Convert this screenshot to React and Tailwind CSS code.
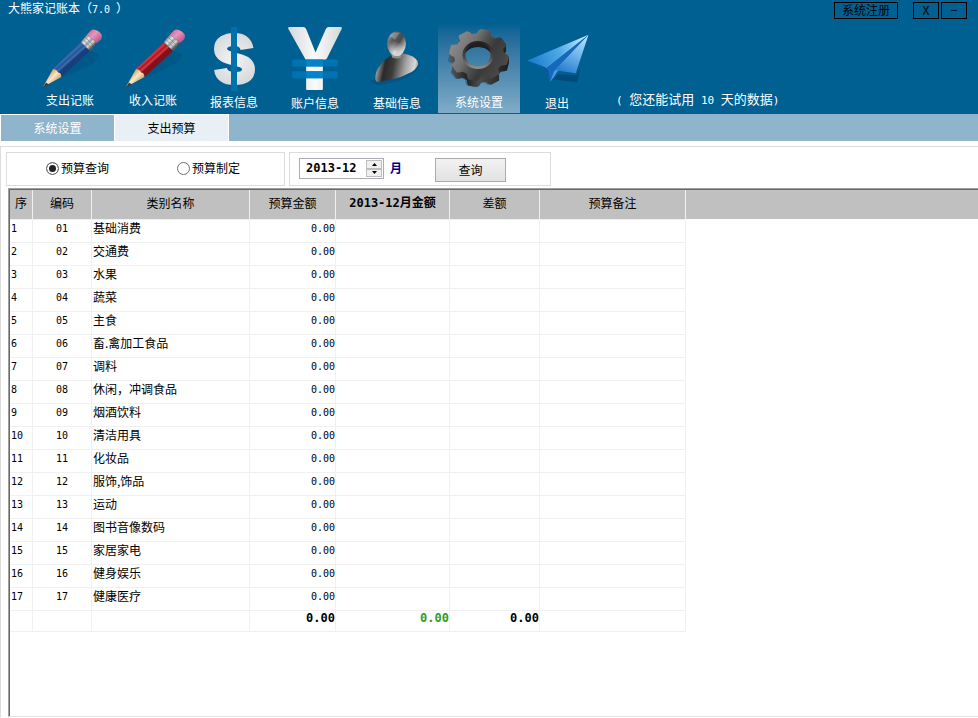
import { useState } from 'react';

const CATEGORIES = [
    '基础消费', '交通费', '水果', '蔬菜', '主食', '畜.禽加工食品', '调料', '休闲，冲调食品', '烟酒饮料',
    '清洁用具', '化妆品', '服饰,饰品', '运动', '图书音像数码', '家居家电', '健身娱乐', '健康医疗'
];

const rows = CATEGORIES.map((name, i) => ({
    no: i + 1,
    code: String(i + 1).padStart(2, '0'),
    name,
    budget: '0.00'
}));

const Pencil = ({ id, dark, mid, light }) => (
    <svg viewBox="0 0 80 70" className="h-[70px] w-[80px]" aria-hidden="true">
        <defs>
            <linearGradient id={`${id}-body`} gradientUnits="userSpaceOnUse" x1="35" y1="31" x2="43" y2="40">
                <stop offset="0" stopColor={mid} />
                <stop offset="0.25" stopColor={light} />
                <stop offset="0.4" stopColor={mid} />
                <stop offset="0.6" stopColor={light} />
                <stop offset="0.75" stopColor={dark} />
                <stop offset="1" stopColor={dark} />
            </linearGradient>
            <linearGradient id={`${id}-metal`} gradientUnits="userSpaceOnUse" x1="53" y1="14" x2="62" y2="23">
                <stop offset="0" stopColor="#77797b" />
                <stop offset="0.35" stopColor="#e6e6e6" />
                <stop offset="0.55" stopColor="#9a9c9e" />
                <stop offset="0.75" stopColor="#d8d8d8" />
                <stop offset="1" stopColor="#55585b" />
            </linearGradient>
            <linearGradient id={`${id}-wood`} gradientUnits="userSpaceOnUse" x1="20" y1="49" x2="28" y2="57">
                <stop offset="0" stopColor="#d9ab6c" />
                <stop offset="0.45" stopColor="#fbe8c6" />
                <stop offset="1" stopColor="#c99a60" />
            </linearGradient>
            <linearGradient id={`${id}-eraser`} gradientUnits="userSpaceOnUse" x1="60" y1="7" x2="69" y2="17">
                <stop offset="0" stopColor="#d4719f" />
                <stop offset="0.4" stopColor="#ea95ba" />
                <stop offset="1" stopColor="#b65a8b" />
            </linearGradient>
        </defs>
        <path d="M30 52 L60 27 L69 30 Q70 36 58 42 Q42 50 18 60 Z" fill="#00507f" opacity="0.5" />
        <path d="M13 63 L23 45 Q27 45 28 48 Q31 48 31.500 53 Z" fill={`url(#${id}-wood)`} />
        <path d="M12.500 64 L16 58.500 L19 60.500 Z" fill="#3a3c40" />
        <path d="M23 45 L51 18 L60 27 L31.500 53 Q32 48.500 28 48.500 Q27 45 23 45 Z" fill={`url(#${id}-body)`} />
        <path d="M51 18 L57 10.500 L67 19 L60 27 Z" fill={`url(#${id}-metal)`} />
        <path d="M53 15.500 L62 24.500 M55 13 L64 22" stroke="#77797b" strokeWidth="1" opacity="0.6" />
        <path d="M57 10.500 L61 6.500 Q63 5 66 6 Q70 7.500 72 11 Q72 14 71 15.500 L67 19 Z" fill={`url(#${id}-eraser)`} />
    </svg>
);

const DollarIcon = () => (
    <svg viewBox="0 0 80 70" className="h-[70px] w-[80px]" aria-hidden="true">
        <defs>
            <radialGradient id="dollar" gradientUnits="userSpaceOnUse" cx="40" cy="35" r="32">
                <stop offset="0" stopColor="#f4f4f4" />
                <stop offset="1" stopColor="#d0d3d7" />
            </radialGradient>
        </defs>
        <path
            d="M53 25 C52 18 47 15.500 40.500 15.500 C32 15.500 26.500 18.500 26.500 25 C26.500 31 32 33 40 35 C49 37 54.500 39 54.500 45.500 C54.500 52 49 54.500 41 54.500 C33 54.500 27.500 52 26.500 45"
            fill="none"
            stroke="url(#dollar)"
            strokeWidth="13"
        />
        <rect x="37" y="3" width="6" height="64" fill="#0071ac" />
    </svg>
);

const YuanIcon = () => (
    <svg viewBox="0 0 80 70" className="h-[70px] w-[80px]" aria-hidden="true">
        <defs>
            <linearGradient id="yuan" x1="0" y1="0" x2="1" y2="0">
                <stop offset="0" stopColor="#d4d7da" />
                <stop offset="0.5" stopColor="#fafafa" />
                <stop offset="1" stopColor="#d4d7da" />
            </linearGradient>
        </defs>
        <path
            d="M14 3 H28 Q30 3 31 5 L40.500 29 L51 5 Q52 3 54 3 H66 Q68 3 67 5 L52 35 Q51 37 48 37 V66 Q48 67 47 67 H32 Q31 67 31 66 V37 L13 5 Q12 3 14 3 Z"
            fill="url(#yuan)"
        />
        <rect x="17" y="36" width="46" height="7" rx="1" fill="#0073b4" />
        <rect x="17" y="48" width="46" height="7" rx="1" fill="#0073b4" />
        <rect x="31" y="36" width="17" height="7" fill="#0084ca" />
        <rect x="31" y="48" width="17" height="7" fill="#0084ca" />
    </svg>
);

const PersonIcon = () => (
    <svg viewBox="0 0 80 70" className="h-[70px] w-[80px]" aria-hidden="true">
        <defs>
            <linearGradient id="person-head" x1="0.100" y1="0" x2="0.900" y2="0.700">
                <stop offset="0" stopColor="#a8a8a8" />
                <stop offset="0.35" stopColor="#5a5a5a" />
                <stop offset="0.65" stopColor="#4a4a4a" />
                <stop offset="1" stopColor="#c4c4c4" />
            </linearGradient>
            <radialGradient id="person-chin" gradientUnits="userSpaceOnUse" cx="37" cy="29" r="12">
                <stop offset="0" stopColor="#ffffff" stopOpacity="0.800" />
                <stop offset="1" stopColor="#ffffff" stopOpacity="0" />
            </radialGradient>
            <linearGradient id="person-body" gradientUnits="userSpaceOnUse" x1="19" y1="42" x2="61" y2="50">
                <stop offset="0" stopColor="#b0b0b0" />
                <stop offset="0.2" stopColor="#2a2a2a" />
                <stop offset="0.4" stopColor="#3c3c3c" />
                <stop offset="0.7" stopColor="#a8a8a8" />
                <stop offset="0.9" stopColor="#d8d8d8" />
                <stop offset="1" stopColor="#888888" />
            </linearGradient>
        </defs>
        <path d="M13 58 L26 48 L62 38 Q66 41 58 49 Q46 59 20 62 Z" fill="#00497a" opacity="0.5" />
        <path d="M18 55 Q18 48 22 43 Q27 36 34 32 Q40 29.500 46 30 Q52 31 56 33 Q62 37 61.500 41 Q59 47 52 50 Q45 54 36 56 Q28 57 22 59 Q18 59 18 55 Z" fill="url(#person-body)" />
        <path d="M34 29 L35 34 Q40 36 44 34 L46 28 Z" fill="#8e8e8e" />
        <ellipse cx="39.500" cy="20" rx="9.500" ry="12.500" fill="url(#person-head)" />
        <ellipse cx="39.500" cy="20" rx="9.500" ry="12.500" fill="url(#person-chin)" />
        <path d="M32 13 Q36 7 43 9 Q41 11 38 16 Q35 13 32 13 Z" fill="#c0c0c0" opacity="0.4" />
    </svg>
);

// eight teeth around a slightly flattened circle
const gearPath = (cx, cy, inner, outer) => {
    const at = (deg, r) => {
        const a = (deg * Math.PI) / 180;
        return `${(cx + r * Math.cos(a)).toFixed(1)} ${(cy + r * 0.87 * Math.sin(a)).toFixed(1)}`;
    };
    const points = [];
    for (let i = 0; i < 8; i++) {
        const mid = 12 + i * 45;
        points.push(at(mid - 17, inner), at(mid - 13, outer - 2), at(mid - 9, outer), at(mid + 9, outer), at(mid + 13, outer - 2), at(mid + 17, inner));
    }
    return `M${points.join(' L')} Z`;
};

const HOLE = 'M25 31 a14 12.500 0 1 0 28 0 a14 12.500 0 1 0 -28 0 Z';

const GearIcon = () => (
    <svg viewBox="0 0 80 70" className="h-[70px] w-[80px]" aria-hidden="true">
        <defs>
            <linearGradient id="gear-face" x1="0" y1="0.200" x2="1" y2="0.700">
                <stop offset="0" stopColor="#929292" />
                <stop offset="0.35" stopColor="#727272" />
                <stop offset="0.5" stopColor="#505050" />
                <stop offset="0.65" stopColor="#3a3a3a" />
                <stop offset="1" stopColor="#4c4c4c" />
            </linearGradient>
            <linearGradient id="gear-side" x1="0" y1="0" x2="1" y2="0">
                <stop offset="0" stopColor="#5c5c5c" />
                <stop offset="0.3" stopColor="#232323" />
                <stop offset="0.5" stopColor="#4c4c4c" />
                <stop offset="1" stopColor="#1c1c1c" />
            </linearGradient>
            <linearGradient id="gear-rim" x1="0" y1="0" x2="0" y2="1">
                <stop offset="0" stopColor="#242424" />
                <stop offset="0.6" stopColor="#4a4a4a" />
                <stop offset="1" stopColor="#8c8c8c" />
            </linearGradient>
        </defs>
        <path d={`${gearPath(38, 38, 24, 29)} ${HOLE}`} fillRule="evenodd" fill="#123a52" opacity="0.4" />
        <path d={`${gearPath(40, 37, 25, 30)} ${HOLE}`} fillRule="evenodd" fill="url(#gear-side)" />
        <path d={`${gearPath(40, 35, 25, 30)} ${HOLE}`} fillRule="evenodd" fill="url(#gear-side)" />
        <path d={`${gearPath(40, 33, 25, 30)} ${HOLE}`} fillRule="evenodd" fill="url(#gear-side)" />
        <path d={`${gearPath(40, 31, 25, 30)} ${HOLE}`} fillRule="evenodd" fill="url(#gear-face)" />
        <ellipse cx="39" cy="31" rx="14" ry="12.500" fill="none" stroke="url(#gear-rim)" strokeWidth="3" />
        <path d="M26 29 Q29 19 39 19 Q49 19 52 29 Q47 23 39 23 Q31 23 26 29 Z" fill="#1f1f1f" />
    </svg>
);

const PlaneIcon = () => (
    <svg viewBox="0 0 74 70" className="h-[70px] w-[74px]" aria-hidden="true">
        <defs>
            <linearGradient id="plane-left" gradientUnits="userSpaceOnUse" x1="10" y1="36" x2="66" y2="14">
                <stop offset="0" stopColor="#1c7fd0" />
                <stop offset="0.5" stopColor="#4fa9e6" />
                <stop offset="1" stopColor="#c9ecff" />
            </linearGradient>
            <linearGradient id="plane-right" gradientUnits="userSpaceOnUse" x1="66" y1="14" x2="48" y2="50">
                <stop offset="0" stopColor="#b5defa" />
                <stop offset="0.5" stopColor="#6fb4ea" />
                <stop offset="1" stopColor="#2b80cf" />
            </linearGradient>
        </defs>
        <path d="M31 59 L38 51 L57 52 L60 45 L58 59 Q46 58 33 56 Z" fill="#003e66" opacity="0.6" />
        <path d="M7 37 L69 11 L25 46 Z" fill="url(#plane-left)" />
        <path d="M25 46 L69 11 L37 48 L30 59 Z" fill="#1668bd" />
        <path d="M69 11 L34 48 L30 59 L37 49 Z" fill="#4b9be0" />
        <path d="M69 11 L56 50 L35 47 Z" fill="url(#plane-right)" />
        <path d="M7 37 L25 46 L30 58 L28 47 L25 44 Z" fill="#0b559f" />
    </svg>
);

const TOOLS = [
    { label: '支出记账', item: 'w-[84px]', text: 'leading-3', icon: <Pencil id="blue" dark="#173f7c" mid="#24559a" light="#3d6db0" /> },
    { label: '收入记账', item: 'w-[82px]', text: 'leading-3', icon: <Pencil id="red" dark="#850f1a" mid="#b3141f" light="#d23a45" /> },
    { label: '报表信息', item: 'w-[80px]', text: 'leading-4', icon: <DollarIcon /> },
    { label: '账户信息', item: 'w-[82px]', text: 'leading-5', icon: <YuanIcon /> },
    { label: '基础信息', item: 'w-[82px]', text: 'leading-5', icon: <PersonIcon /> },
    { label: '系统设置', item: 'w-[82px] bg-linear-to-b from-[#006092] to-[#7fadc8]', text: 'leading-4', icon: <GearIcon /> },
    { label: '退出', item: 'w-[74px]', text: 'leading-5', icon: <PlaneIcon /> }
];

const COLUMNS = [
    { title: '序', col: 'w-[23px]' },
    { title: '编码', col: 'w-[59px]' },
    { title: '类别名称', col: 'w-[158px]' },
    { title: '预算金额', col: 'w-[86px]' },
    { title: null, col: 'w-[114px]' },
    { title: '差额', col: 'w-[90px]' },
    { title: '预算备注', col: 'w-[146px]' }
];

const WINDOW_BUTTON = 'h-[17px] border border-black pb-[2px] text-center leading-[13px] text-black';
const CELL = 'h-[23px] border-r border-b border-[#f0f0f0] pb-[6px] leading-4';
const NUM_CELL = "h-[23px] border-r border-b border-[#f0f0f0] pb-1 font-['DejaVu_Sans_Mono',monospace] text-[10px] leading-[18px]";
const TOTAL = "h-[21px] border-r border-b border-[#f0f0f0] pb-[6px] text-right font-['DejaVu_Sans_Mono',monospace] text-xs leading-[14px] font-bold";
const RADIO = 'size-[13px] appearance-none rounded-full border border-[#707070] bg-white checked:bg-[#222222] checked:shadow-[inset_0_0_0_2px_#ffffff]';
const SPIN = 'flex flex-1 items-center justify-center border border-[#bdbdbd] bg-[#f0f0f0]';

const shiftMonth = (value, step) => {
    const [year, month] = value.split('-').map(Number);
    const total = year * 12 + month - 1 + step;
    return `${Math.floor(total / 12)}-${String((total % 12) + 1).padStart(2, '0')}`;
};

const Header = () => (
    <header className="h-[114px] bg-[#006092] text-white">
        <div className="flex h-6 items-start justify-between pr-[11px] pl-2">
            <h1 className="leading-4">
                大熊家记账本（<span className="font-['DejaVu_Sans_Mono',monospace] text-[10px]">7.0 </span>）
            </h1>
            <div className="flex pt-[2px]">
                <button className={`${WINDOW_BUTTON} mr-[15px] w-16`}>系统注册</button>
                <button className={`${WINDOW_BUTTON} mr-[2px] w-[26px]`} aria-label="关闭">X</button>
                <button className={`${WINDOW_BUTTON} w-[26px]`} aria-label="最小化">−</button>
            </div>
        </div>
        <nav className="flex h-[89px] pl-7">
            {TOOLS.map(tool => (
                <button key={tool.label} className={`flex shrink-0 flex-col items-center ${tool.item}`}>
                    {tool.icon}
                    <span className={tool.text}>{tool.label}</span>
                </button>
            ))}
            <p className="self-end pb-1 pl-[22px] text-[13px] leading-4 whitespace-nowrap">
                <span className="font-['DejaVu_Sans_Mono',monospace] text-[11px]">( </span>
                您还能试用
                <span className="font-['DejaVu_Sans_Mono',monospace] text-[11px]"> 10 </span>
                天的数据
                <span className="font-['DejaVu_Sans_Mono',monospace] text-[11px]">)</span>
            </p>
        </nav>
    </header>
);

const App = () => {
    const [mode, setMode] = useState('query');
    const [month, setMonth] = useState('2013-12');

    return (
        <div className="flex min-h-screen flex-col bg-white pb-px font-['Noto_Sans_CJK_SC',sans-serif] text-xs text-black">
            <Header />

            <div className="flex h-[27px] bg-[#8eb5cc]">
                <div className="flex gap-px bg-white pt-px pr-px pl-px">
                    <button className="w-[113px] bg-[#8eb5cc] text-white">系统设置</button>
                    <button className="w-[113px] bg-[#e8f0f6]">支出预算</button>
                </div>
            </div>

            <main className="mt-[5px] flex flex-1 flex-col border-t border-l border-[#dcdcdc] pt-[5px]">
                <div className="flex gap-1 pl-[5px]">
                    <fieldset className="flex h-[34px] w-[279px] items-center gap-[68px] border border-[#dcdcdc] pb-[2px] pl-[39px]">
                        <label className="flex items-center gap-[2px]">
                            <input type="radio" name="mode" className={RADIO} checked={mode === 'query'} onChange={() => setMode('query')} />
                            预算查询
                        </label>
                        <label className="flex items-center gap-[2px]">
                            <input type="radio" name="mode" className={RADIO} checked={mode === 'plan'} onChange={() => setMode('plan')} />
                            预算制定
                        </label>
                    </fieldset>
                    <div className="flex h-[34px] w-[262px] items-start border border-[#dcdcdc] pt-[5px] pl-[9px]">
                        <div className="flex h-[21px] w-[85px] border border-[#ababb3] p-px">
                            <input
                                id="month"
                                type="text"
                                value={month}
                                onChange={e => setMonth(e.target.value)}
                                className="w-[65px] pb-[2px] pl-[5px] font-['DejaVu_Sans_Mono',monospace] text-xs leading-4 font-bold outline-none"
                            />
                            <div className="flex flex-1 flex-col">
                                <button className={SPIN} aria-label="下个月" onClick={() => setMonth(shiftMonth(month, 1))}>
                                    <svg viewBox="0 0 5 3" className="h-[3px] w-[5px]"><path d="M0 3 L2.500 0 L5 3 Z" /></svg>
                                </button>
                                <button className={SPIN} aria-label="上个月" onClick={() => setMonth(shiftMonth(month, -1))}>
                                    <svg viewBox="0 0 5 3" className="h-[3px] w-[5px]"><path d="M0 0 L2.500 3 L5 0 Z" /></svg>
                                </button>
                            </div>
                        </div>
                        <label htmlFor="month" className="w-[51px] pl-[6px] leading-5 font-bold text-[#000080]">月</label>
                        <button className="h-6 w-[71px] border border-[#ababab] bg-linear-to-b from-[#f2f2f2] to-[#e2e2e2] leading-[22px]">查询</button>
                    </div>
                </div>

                <div className="mt-[2px] ml-[7px] flex flex-1 border-t border-b border-l border-t-[#a0a0a0] border-b-[#e3e3e3] border-l-[#a0a0a0]">
                    <div className="flex-1 border-t border-l border-[#696969]">
                        <table className="w-full table-fixed border-separate border-spacing-0">
                            <thead>
                                <tr className="bg-[#c0c0c0]">
                                    {COLUMNS.map((column, i) => (
                                        <th
                                            key={i}
                                            className={`${column.col} h-[30px] border-r border-b border-[#f0f0f0] pb-1 leading-5 ${column.title ? 'font-normal' : 'font-bold'}`}
                                        >
                                            {column.title || (
                                                <>
                                                    <span className="font-['DejaVu_Sans_Mono',monospace]">{month}</span>月金额
                                                </>
                                            )}
                                        </th>
                                    ))}
                                    <th className="border-b border-white" />
                                </tr>
                            </thead>
                            <tbody>
                                {rows.map(row => (
                                    <tr key={row.code}>
                                        <td className={`${NUM_CELL} pl-px`}>{row.no}</td>
                                        <td className={`${NUM_CELL} text-center`}>{row.code}</td>
                                        <td className={`${CELL} pl-px`}>{row.name}</td>
                                        <td className={`${NUM_CELL} text-right`}>{row.budget}</td>
                                        <td className={CELL} />
                                        <td className={CELL} />
                                        <td className={CELL} />
                                        <td />
                                    </tr>
                                ))}
                            </tbody>
                            <tfoot>
                                <tr>
                                    <td className={TOTAL} />
                                    <td className={TOTAL} />
                                    <td className={TOTAL} />
                                    <td className={TOTAL}>0.00</td>
                                    <td className={`${TOTAL} text-[#339c1d]`}>0.00</td>
                                    <td className={TOTAL}>0.00</td>
                                    <td className={TOTAL} />
                                    <td />
                                </tr>
                            </tfoot>
                        </table>
                    </div>
                </div>
            </main>
        </div>
    );
};

export default App;
